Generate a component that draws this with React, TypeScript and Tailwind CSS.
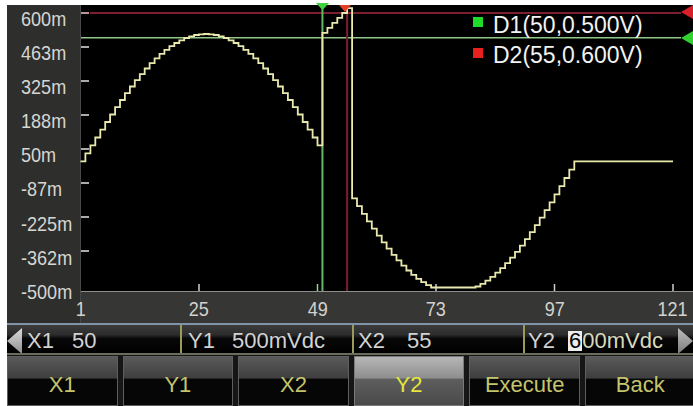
import React from "react";

// plot geometry (inside the black plot area, 612 x 286)
const px = (x: number) => -0.5 + (x - 1) * 4.9375;
const py = (v: number) => 8 + ((0.6 - v) / 1.1) * 272;

const sampleAt = (x: number) => {
  if (x <= 49) return 0.515 * Math.sin((Math.PI * (x - 1)) / 50);
  if (x <= 55) return 0.52 + (x - 50) * 0.02;
  if (x <= 101)
    return Math.max(-0.51, -0.53 * Math.sin((Math.PI * (x - 51.5)) / 49.5));
  return 0;
};

const tracePath = (() => {
  let d = `M${px(1).toFixed(1)},${py(sampleAt(1)).toFixed(1)}`;
  for (let i = 1; i < 121; i++) {
    d += ` H${px(i + 1).toFixed(1)} V${py(sampleAt(i + 1)).toFixed(1)}`;
  }
  return d;
})();

const yLabels = ["600m", "463m", "325m", "188m", "50m", "-87m", "-225m", "-362m", "-500m"];
const xLabels = ["1", "25", "49", "73", "97", "121"];
const buttons = ["X1", "Y1", "X2", "Y2", "Execute", "Back"];

const Plot: React.FC = () => (
  <svg width={612} height={286} className="block overflow-visible">
    {/* y ticks */}
    {[0, 1, 2, 3, 4, 5, 6, 7].map((k) => (
      <line
        key={k}
        x1={0}
        x2={8}
        y1={py(0.6 - k * 0.1375)}
        y2={py(0.6 - k * 0.1375)}
        stroke={k === 0 ? "#f0c4cc" : "#e4e4e4"}
        strokeWidth={1.5}
      />
    ))}
    {/* x ticks */}
    {[25, 49, 73, 97, 121].map((x) => (
      <line
        key={x}
        x1={px(x)}
        x2={px(x)}
        y1={279}
        y2={286}
        stroke={x === 49 ? "#9ccf96" : "#cfcfcf"}
        strokeWidth={1.5}
      />
    ))}
    {/* cursors */}
    <line x1={9} x2={600} y1={py(0.6)} y2={py(0.6)} stroke="#a62a42" strokeWidth={1.6} />
    <line x1={0} x2={600} y1={py(0.5)} y2={py(0.5)} stroke="#8fc88a" strokeWidth={1.5} />
    <line x1={px(55)} x2={px(55)} y1={0} y2={286} stroke="#7c1e2e" strokeWidth={2} />
    <line x1={px(50)} x2={px(50)} y1={0} y2={286} stroke="#66b866" strokeWidth={2} />
    {/* trace */}
    <path d={tracePath} fill="none" stroke="#e9e9ae" strokeWidth={1.8} />
    {/* markers */}
    <polygon points="235,-2 248,-2 241.5,5" fill="#3ed23e" />
    <polygon points="258,0 270,0 264,7" fill="#e0402a" />
    <polygon points="612,0 612,14 600,7" fill="#d8202a" />
    <polygon points="612,26 612,40 600,33" fill="#2fd22f" />
  </svg>
);

const LeftArrow = () => (
  <svg width={15} height={26} className="shrink-0">
    <defs>
      <linearGradient id="la" x1="0" y1="0" x2="0" y2="1">
        <stop offset="0" stopColor="#dcdcdc" />
        <stop offset="1" stopColor="#8e8e8e" />
      </linearGradient>
    </defs>
    <polygon points="15,0 0,13 15,26" fill="url(#la)" />
  </svg>
);

const RightArrow = () => (
  <svg width={15} height={26} className="shrink-0">
    <defs>
      <linearGradient id="ra" x1="0" y1="0" x2="0" y2="1">
        <stop offset="0" stopColor="#bdbdbd" />
        <stop offset="1" stopColor="#7c7c7c" />
      </linearGradient>
    </defs>
    <polygon points="0,0 15,13 0,26" fill="url(#ra)" />
  </svg>
);

const App: React.FC = () => {
  return (
    <div className="w-[693px] h-[406px] overflow-hidden bg-white pl-[7px] pt-[5px] flex flex-col font-['Liberation_Sans',Arial,sans-serif]">
      {/* chart */}
      <div className="flex h-[318px] shrink-0">
        <div className="w-[74px] shrink-0 bg-[#2e2e2c] border-r border-[#48484a]">
          <div className="-mt-[3px] pl-[14px] flex flex-col">
            {yLabels.map((l) => (
              <div
                key={l}
                className="h-[34.1px] leading-[34.1px] text-[21px] scale-x-[0.86] origin-left text-[#d6d6d2]"
              >
                {l}
              </div>
            ))}
          </div>
        </div>
        <div className="flex flex-col w-[612px] shrink-0">
          <div className="relative h-[286px] bg-black">
            <Plot />
            <div className="absolute left-[392px] top-[4px] text-[23px] leading-[30px] text-[#f2f2f2]">
              <div className="h-[30px] flex items-center">
                <span className="w-[10px] h-[10px] bg-[#1fdc2a] mr-[10px] mb-[4px]" />
                <span className="inline-block scale-y-[1.08]">D1(50,0.500V)</span>
              </div>
              <div className="h-[30px] flex items-center">
                <span className="w-[10px] h-[10px] bg-[#e8201e] mr-[10px] mb-[2px]" />
                <span className="inline-block scale-y-[1.08]">D2(55,0.600V)</span>
              </div>
            </div>
          </div>
          <div className="h-[32px] bg-[#363634] border-t border-[#8e8e8a]">
            <div className="flex h-full -ml-[59.75px] pt-[2px]">
              {xLabels.map((l) => (
                <div
                  key={l}
                  className="w-[118.5px] shrink-0 flex items-center justify-center text-[21px] text-[#d2d2ce]"
                >
                  <span className="inline-block scale-x-[0.86]">{l}</span>
                </div>
              ))}
            </div>
          </div>
        </div>
      </div>

      {/* cursor readout */}
      <div className="h-[30px] shrink-0 border-t-2 border-[#8193a6] bg-[linear-gradient(to_bottom,#3c3c3c_0%,#2c2c2c_35%,#080808_48%,#000000_100%)] flex text-[22px] text-[#d2d2d2]">
        <div className="w-[173px] shrink-0 flex items-center pt-[3px]">
          <LeftArrow />
          <span className="ml-[5px] w-[45px]">X1</span>
          <span>50</span>
        </div>
        <div className="w-[172px] shrink-0 flex items-center pt-[3px] pl-[6px] border-l-2 border-[#9a9a5a]">
          <span className="w-[44px]">Y1</span>
          <span>500mVdc</span>
        </div>
        <div className="w-[171px] shrink-0 flex items-center pt-[3px] pl-[4px] border-l-2 border-[#9a9a5a]">
          <span className="w-[49px]">X2</span>
          <span>55</span>
        </div>
        <div className="flex-1 flex items-center pt-[3px] pl-[3px] border-l-2 border-[#9a9a5a]">
          <span className="w-[40px]">Y2</span>
          <span className="bg-[#ececec] text-black leading-[20px] px-[1px]">6</span>
          <span className="text-[#d8d8bc]">00mVdc</span>
          <span className="flex-1" />
          <RightArrow />
        </div>
      </div>

      {/* soft keys */}
      <div className="flex-1 border-t-2 border-[#6c6c5c] bg-[#161616] flex gap-[5px] pt-[1px]">
        {buttons.map((b) => {
          const active = b === "Y2";
          return (
            <div
              key={b}
              className={
                active
                  ? "w-[110.6px] shrink-0 border border-[#7a7a7a] flex items-center justify-center pt-[6px] text-[22px] text-[#e6e63c] bg-[linear-gradient(to_bottom,#b6b6b6_0%,#8e8e8e_44%,#5e5e5e_46%,#4a4a4a_100%)]"
                  : "w-[110.6px] shrink-0 border border-[#5e5e5e] flex items-center justify-center pt-[6px] text-[22px] text-[#c4c46c] bg-[linear-gradient(to_bottom,#5a5a5a_0%,#3e3e3e_44%,#060606_46%,#060606_100%)]"
              }
            >
              {b}
            </div>
          );
        })}
      </div>
    </div>
  );
};

export default App;
